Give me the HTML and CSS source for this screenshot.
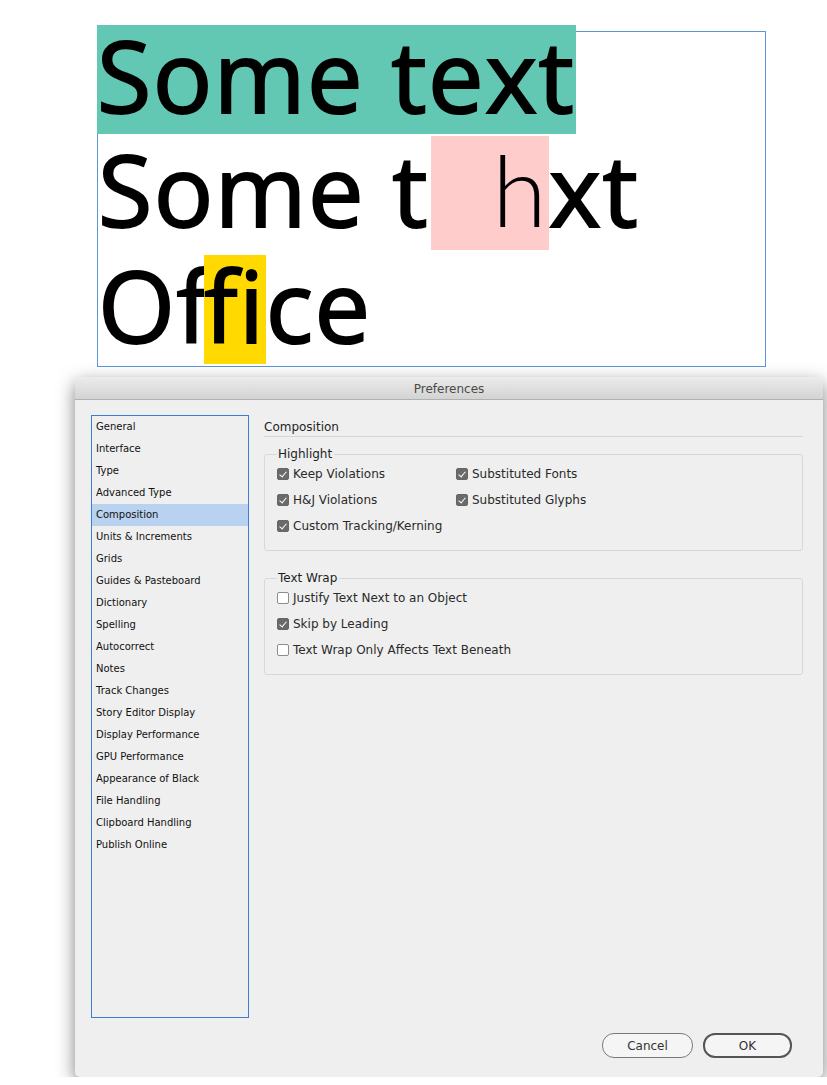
FILE: index.html
```html
<!DOCTYPE html>
<html lang="en">
<head>
    <meta charset="UTF-8">
    <meta name="viewport" content="width=device-width, initial-scale=1.0">
    <title>Composition preferences</title>
    <link rel="stylesheet" href="styles.css">
</head>
<body>
    <div class="frame">
        <div class="line first"><span class="hl teal">Some text</span></div>
        <div class="line second">Some t<span class="hl pink"><span class="thin">h</span></span>xt</div>
        <div class="line third">Of<span class="hl yellow">fi</span>ce</div>
    </div>

    <div class="dialog">
        <div class="titlebar">Preferences</div>
        <div class="dialog-body">
            <ul class="sidebar">
                <li>General</li>
                <li>Interface</li>
                <li>Type</li>
                <li>Advanced Type</li>
                <li class="selected">Composition</li>
                <li>Units &amp; Increments</li>
                <li>Grids</li>
                <li>Guides &amp; Pasteboard</li>
                <li>Dictionary</li>
                <li>Spelling</li>
                <li>Autocorrect</li>
                <li>Notes</li>
                <li>Track Changes</li>
                <li>Story Editor Display</li>
                <li>Display Performance</li>
                <li>GPU Performance</li>
                <li>Appearance of Black</li>
                <li>File Handling</li>
                <li>Clipboard Handling</li>
                <li>Publish Online</li>
            </ul>

            <div class="panel">
                <div class="panel-title">Composition</div>

                <fieldset class="group">
                    <legend>Highlight</legend>
                    <div class="options two-col">
                        <label class="opt"><span class="box checked"></span>Keep Violations</label>
                        <label class="opt"><span class="box checked"></span>Substituted Fonts</label>
                        <label class="opt"><span class="box checked"></span>H&amp;J Violations</label>
                        <label class="opt"><span class="box checked"></span>Substituted Glyphs</label>
                        <label class="opt"><span class="box checked"></span>Custom Tracking/Kerning</label>
                    </div>
                </fieldset>

                <fieldset class="group wrap">
                    <legend>Text Wrap</legend>
                    <div class="options">
                        <label class="opt"><span class="box"></span>Justify Text Next to an Object</label>
                        <label class="opt"><span class="box checked"></span>Skip by Leading</label>
                        <label class="opt"><span class="box"></span>Text Wrap Only Affects Text Beneath</label>
                    </div>
                </fieldset>
            </div>
        </div>

        <div class="footer">
            <button class="btn">Cancel</button>
            <button class="btn default">OK</button>
        </div>
    </div>
</body>
</html>
```

FILE: styles.css
```css
body {
    margin: 0;
    padding: 0;
    background: #fff;
    font-family: 'DejaVu Sans', sans-serif;
    color: #222;
    overflow: hidden;
}

/* text frame with highlighted lines */
.frame {
    margin: 31px 0 0 97px;
    width: 667px;
    height: 334px;
    border: 1px solid #5a96d8;
    font-family: 'Open Sans', sans-serif;
    color: #000;
    -webkit-text-stroke: 2px #000;
}

.line {
    font-size: 99px;
    line-height: 99px;
    letter-spacing: 1.5px;
    white-space: nowrap;
}

.line.first {
    margin: -7px 0 0 -1px;
}

.line.second {
    margin-top: 2px;
}

.line.third {
    margin-top: 5px;
}

.hl {
    display: inline-block;
    box-sizing: border-box;
}

.teal {
    height: 109px;
    background: #63c8b3;
    padding-right: 1px;
}

.pink {
    height: 114px;
    width: 118px;
    margin-left: 2px;
    padding-top: 3px;
    text-align: right;
    background: #ffcccc;
}

.thin {
    font-family: 'Lato', 'Open Sans', sans-serif;
    font-weight: 300;
    margin-right: 1px;
    -webkit-text-stroke: 0;
}

.yellow {
    height: 109px;
    margin-left: -7px;
    background: #ffd900;
}

/* preferences dialog */
.dialog {
    margin: 10px 0 0 75px;
    width: 748px;
    height: 700px;
    background: #efefef;
    border-radius: 5px;
    box-shadow: 0 6px 18px rgba(0, 0, 0, 0.5);
    display: flex;
    flex-direction: column;
}

.titlebar {
    height: 22px;
    line-height: 24px;
    text-align: center;
    font-size: 12px;
    color: #4a4a4a;
    background: linear-gradient(#ececec, #d3d3d3);
    border-bottom: 1px solid #b0b0b0;
    border-radius: 5px 5px 0 0;
}

.dialog-body {
    display: flex;
    padding: 15px 20px 0 16px;
}

.sidebar {
    list-style: none;
    margin: 0;
    padding: 0;
    width: 156px;
    height: 601px;
    border: 1px solid #3b7ed0;
    font-size: 10px;
    color: #111;
}

.sidebar li {
    height: 22px;
    line-height: 22px;
    padding-left: 4px;
}

.sidebar li.selected {
    background: #b8d2ef;
}

.panel {
    flex: 1;
    margin-left: 15px;
}

.panel-title {
    font-size: 12px;
    line-height: 14px;
    padding: 5px 0 2px;
    border-bottom: 1px solid #d6d6d6;
    color: #1e1e1e;
}

.group {
    margin: 10px 0 0;
    padding: 0 12px 11px 12px;
    border: 1px solid #d8d8d8;
    border-radius: 3px;
    min-width: 0;
}

.group.wrap {
    margin-top: 20px;
}

.group legend {
    font-size: 12px;
    line-height: 14px;
    padding: 0 2px 0 1px;
    color: #1e1e1e;
}

.options {
    display: grid;
}

.options.two-col {
    grid-template-columns: 179px auto;
}

.opt {
    display: flex;
    align-items: center;
    height: 26px;
    font-size: 12px;
    color: #2a2a2a;
}

.box {
    width: 12px;
    height: 12px;
    box-sizing: border-box;
    border: 1px solid #8c8c8c;
    border-radius: 2px;
    background: #fff;
    margin-right: 4px;
    position: relative;
}

.box.checked {
    border-color: #666;
    background: #6a6a6a;
}

.box.checked::after {
    content: '';
    position: absolute;
    left: 3px;
    top: 1px;
    width: 3px;
    height: 6px;
    border: solid #fff;
    border-width: 0 1.5px 1.5px 0;
    transform: rotate(40deg);
}

.footer {
    display: flex;
    justify-content: flex-end;
    gap: 10px;
    padding: 15px 31px 0 0;
}

.btn {
    width: 91px;
    height: 25px;
    border: 1px solid #7a7a7a;
    border-radius: 12px;
    background: #f5f5f5;
    font-family: 'DejaVu Sans', sans-serif;
    font-size: 12px;
    color: #333;
    padding: 0;
}

.btn.default {
    width: 89px;
    border: 2px solid #555;
}
```
